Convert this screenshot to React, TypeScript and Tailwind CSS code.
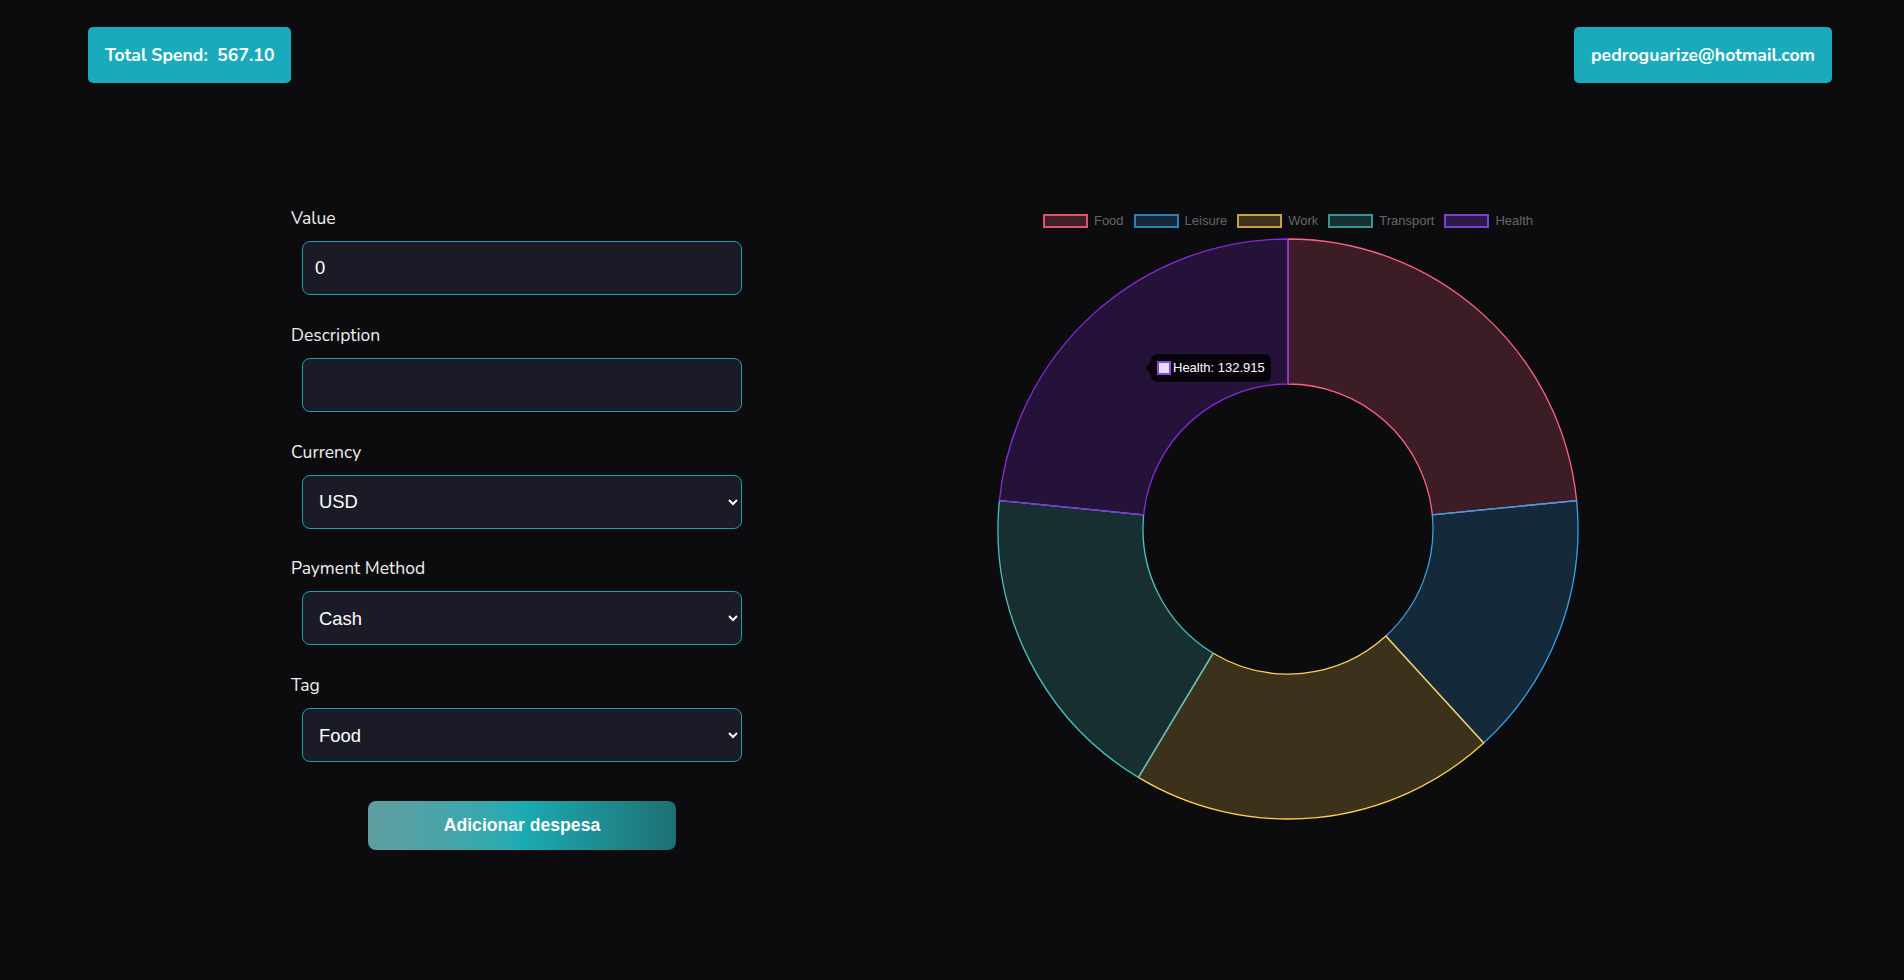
import React from 'react';

interface Slice {
  label: string;
  value: number;
  color: string;
  fill: string;
}

const slices: Slice[] = [
  { label: 'Food', value: 132.915, color: 'rgb(255, 99, 132)', fill: 'rgba(255, 99, 132, 0.2)' },
  { label: 'Leisure', value: 83.79, color: 'rgb(54, 162, 235)', fill: 'rgba(54, 162, 235, 0.2)' },
  { label: 'Work', value: 115.78, color: 'rgb(255, 206, 86)', fill: 'rgba(255, 206, 86, 0.2)' },
  { label: 'Transport', value: 101.71, color: 'rgb(75, 192, 192)', fill: 'rgba(75, 192, 192, 0.2)' },
  { label: 'Health', value: 132.915, color: 'rgb(138, 43, 226)', fill: 'rgba(138, 43, 226, 0.2)' },
];

const legendBox: Record<string, string> = {
  Food: 'border-[#d9546c] bg-[#3f1f28]',
  Leisure: 'border-[#2f7fb8] bg-[#14283a]',
  Work: 'border-[#c9a043] bg-[#3c331d]',
  Transport: 'border-[#3a9494] bg-[#183032]',
  Health: 'border-[#7a44c8] bg-[#2a1a45]',
};

const SIZE = 584;
const CX = SIZE / 2;
const CY = SIZE / 2;
const OUTER = 290;
const INNER = 145;

const point = (r: number, deg: number) => {
  const rad = (deg * Math.PI) / 180;
  return [CX + r * Math.sin(rad), CY - r * Math.cos(rad)];
};

const arcPath = (start: number, end: number) => {
  const large = end - start > 180 ? 1 : 0;
  const [x1, y1] = point(OUTER, start);
  const [x2, y2] = point(OUTER, end);
  const [x3, y3] = point(INNER, end);
  const [x4, y4] = point(INNER, start);
  return `M ${x1} ${y1} A ${OUTER} ${OUTER} 0 ${large} 1 ${x2} ${y2} L ${x3} ${y3} A ${INNER} ${INNER} 0 ${large} 0 ${x4} ${y4} Z`;
};

const Field = ({ label, children }: { label: string; children: React.ReactNode }) => (
  <div className="flex flex-col">
    <label className="text-[17.5px] leading-[26px] text-[#f0f0f0]">{label}</label>
    <div className="mt-[10px] px-[11px]">{children}</div>
  </div>
);

const inputClass =
  "w-full h-[54px] rounded-lg border border-[#1b9fae] bg-[#1a1b26] px-3 font-['Liberation_Sans',Arial,sans-serif] text-[18.4px] text-white outline-none";

const DonutChart = () => {
  const total = slices.reduce((sum, s) => sum + s.value, 0);
  let angle = 0;
  const arcs = slices.map((s) => {
    const start = angle;
    angle += (s.value / total) * 360;
    return { ...s, d: arcPath(start, angle) };
  });

  return (
    <div className="flex flex-col w-[584px]">
      <div className="flex h-[20px] items-center justify-center gap-[10px] font-['Liberation_Sans',Arial,sans-serif] text-[13px] text-[#666]">
        {slices.map((s) => (
          <div key={s.label} className="flex items-center gap-[6px]">
            <div className={`w-[45px] h-[14px] shrink-0 border-2 ${legendBox[s.label]}`} />
            <span>{s.label}</span>
          </div>
        ))}
      </div>
      <div className="relative mt-[5.5px]">
        <svg width={SIZE} height={SIZE} viewBox={`0 0 ${SIZE} ${SIZE}`}>
          {arcs.map((a) => (
            <path key={a.label} d={a.d} fill={a.fill} stroke={a.color} strokeWidth={1.3} strokeLinejoin="round" />
          ))}
        </svg>
        <div className="absolute left-[155px] top-[117px] flex h-[28px] items-center gap-[2px] rounded-[6px] bg-[rgba(0,0,0,0.8)] px-[6px] font-['Liberation_Sans',Arial,sans-serif] text-[13px] text-white">
          <span className="absolute left-[-6px] top-[8px] h-0 w-0 border-y-[6px] border-r-[6px] border-y-transparent border-r-[rgba(0,0,0,0.8)]" />
          <span className="h-[14px] w-[14px] border-2 border-[#8a45e6] bg-[#e9ddff]" />
          <span>Health: 132.915</span>
        </div>
      </div>
    </div>
  );
};

const App = () => {
  return (
    <div className="min-h-[980px] w-full bg-[#0c0c0e] font-['Nunito','Lato','Noto_Sans',sans-serif]">
      <header className="flex items-start justify-between pl-[88px] pr-[72px] pt-[27px]">
        <div className="flex h-[56px] items-center rounded-[5px] bg-[#19abbc] px-[17px] text-[17.6px] font-bold text-white whitespace-pre">
          Total Spend:  567.10
        </div>
        <div className="flex h-[56px] items-center rounded-[5px] bg-[#19abbc] px-[17px] text-[17.6px] font-bold text-white">
          pedroguarize@hotmail.com
        </div>
      </header>

      <main className="flex items-start pl-[291px] gap-[243px]">
        <form className="mt-[122px] flex w-[462px] flex-col gap-[26.75px]" onSubmit={(e) => e.preventDefault()}>
          <Field label="Value">
            <input type="number" defaultValue={0} className={inputClass} />
          </Field>
          <Field label="Description">
            <input type="text" className={inputClass} />
          </Field>
          <Field label="Currency">
            <select defaultValue="USD" className={inputClass}>
              <option>USD</option>
              <option>EUR</option>
              <option>BRL</option>
            </select>
          </Field>
          <Field label="Payment Method">
            <select defaultValue="Cash" className={inputClass}>
              <option>Cash</option>
              <option>Credit Card</option>
              <option>Debit Card</option>
            </select>
          </Field>
          <Field label="Tag">
            <select defaultValue="Food" className={inputClass}>
              <option>Food</option>
              <option>Leisure</option>
              <option>Work</option>
              <option>Transport</option>
              <option>Health</option>
            </select>
          </Field>
          <div className="mt-[12px] flex justify-center">
            <button
              type="submit"
              className="h-[49px] w-[308px] rounded-lg bg-gradient-to-r from-[#5f9ea0] via-[#1aabb2] to-[#1d7073] font-['Liberation_Sans',Arial,sans-serif] text-[17.6px] font-bold text-white"
            >
              Adicionar despesa
            </button>
          </div>
        </form>

        <div className="mt-[128px]">
          <DonutChart />
        </div>
      </main>
    </div>
  );
};

export default App;
